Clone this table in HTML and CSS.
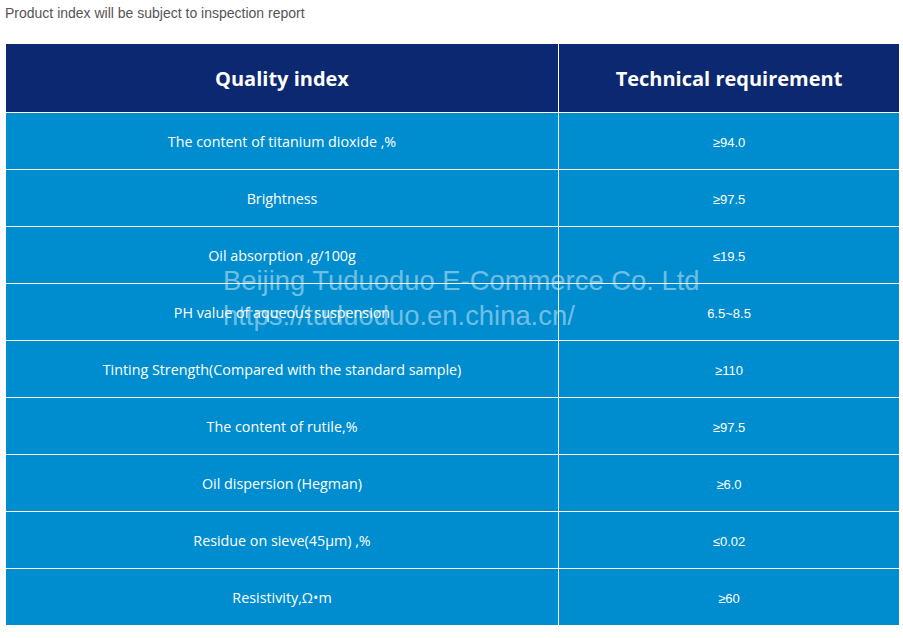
FILE: index.html
```html
<!DOCTYPE html>
<html>
<head>
<meta charset="utf-8">
<link rel="stylesheet" href="styles.css">
</head>
<body>
<p class="note">Product index will be subject to inspection report</p>
<div class="wrap">
  <div class="grid">
    <div class="th">Quality index</div>
    <div class="th">Technical requirement</div>
    <div class="td">The content of titanium dioxide ,%</div>
    <div class="td val">≥94.0</div>
    <div class="td">Brightness</div>
    <div class="td val">≥97.5</div>
    <div class="td">Oil absorption ,g/100g</div>
    <div class="td val">≤19.5</div>
    <div class="td">PH value of aqueous suspension</div>
    <div class="td val">6.5~8.5</div>
    <div class="td">Tinting Strength(Compared with the standard sample)</div>
    <div class="td val">≥110</div>
    <div class="td">The content of rutile,%</div>
    <div class="td val">≥97.5</div>
    <div class="td">Oil dispersion (Hegman)</div>
    <div class="td val">≥6.0</div>
    <div class="td">Residue on sieve(45μm) ,%</div>
    <div class="td val">≤0.02</div>
    <div class="td">Resistivity,Ω•m</div>
    <div class="td val">≥60</div>
  </div>
  <div class="watermark">
    <div>Beijing Tuduoduo E-Commerce Co. Ltd</div>
    <div>https://tuduoduo.en.china.cn/</div>
  </div>
</div>
</body>
</html>
```
FILE: styles.css
```css
html, body {
  margin: 0;
  padding: 0;
  background: #ffffff;
}
.note {
  margin: 5px 0 0 5px;
  font-family: "Liberation Sans", Arial, sans-serif;
  font-size: 14px;
  line-height: 16px;
  color: #555555;
}
.wrap {
  position: relative;
  margin: 23px 0 0 6px;
  width: 893px;
}
.grid {
  display: grid;
  grid-template-columns: 552px 340px;
  grid-template-rows: 68px;
  grid-auto-rows: 56px;
  gap: 1px;
  background: #ffffff;
}
.th {
  background: #0c2870;
  color: #ffffff;
  font-family: "Open Sans", "Noto Sans", sans-serif;
  font-weight: 700;
  font-size: 20px;
  display: flex;
  align-items: center;
  justify-content: center;
}
.td {
  background: #008dcf;
  color: #ffffff;
  font-family: "Open Sans", "Noto Sans", sans-serif;
  font-size: 14.3px;
  display: flex;
  align-items: center;
  justify-content: center;
}
.td.val {
  font-family: "Liberation Sans", Arial, sans-serif;
  font-size: 13px;
  padding-top: 2px;
}
.watermark {
  position: absolute;
  left: 217px;
  top: 219px;
  font-family: "Liberation Sans", Arial, sans-serif;
  font-size: 27.4px;
  line-height: 35px;
  color: rgba(255, 255, 255, 0.45);
  white-space: nowrap;
  pointer-events: none;
}
```
